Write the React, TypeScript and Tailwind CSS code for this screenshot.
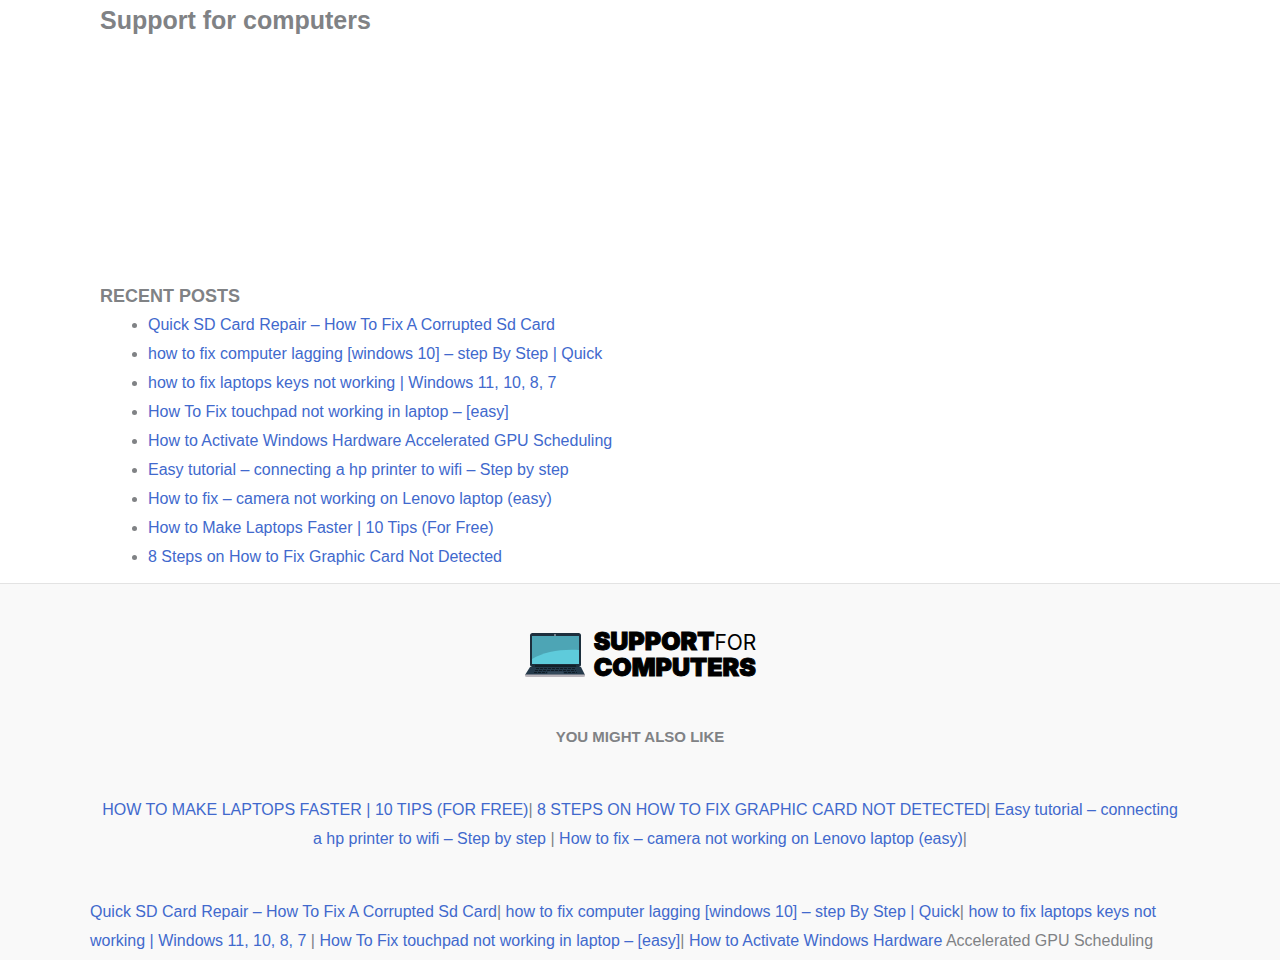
import React from "react";

type Post = { id: number; title: string };

const recentPosts: Post[] = [
  { id: 1, title: "Quick SD Card Repair – How To Fix A Corrupted Sd Card" },
  { id: 2, title: "how to fix computer lagging [windows 10] – step By Step | Quick" },
  { id: 3, title: "how to fix laptops keys not working | Windows 11, 10, 8, 7" },
  { id: 4, title: "How To Fix touchpad not working in laptop – [easy]" },
  { id: 5, title: "How to Activate Windows Hardware Accelerated GPU Scheduling" },
  { id: 6, title: "Easy tutorial – connecting a hp printer to wifi – Step by step" },
  { id: 7, title: "How to fix – camera not working on Lenovo laptop (easy)" },
  { id: 8, title: "How to Make Laptops Faster | 10 Tips (For Free)" },
  { id: 9, title: "8 Steps on How to Fix Graphic Card Not Detected" },
];

const FooterLink: React.FC<{ children: React.ReactNode }> = ({ children }) => (
  <a href="#" className="text-[#4169cd] hover:underline">{children}</a>
);

const LaptopIcon: React.FC = () => (
  <svg width="62" height="46" viewBox="0 0 62 46" aria-hidden="true">
    <rect x="6" y="1" width="51" height="34" rx="2.5" fill="#1d2f3d" />
    <rect x="8" y="4" width="47" height="28" fill="#4da5b5" />
    <path d="M8 32V27C20 20 36 17 55 18V32Z" fill="#5ecbdb" />
    <circle cx="31" cy="3" r="0.8" fill="#dfe7ea" />
    <path d="M11 33H52V36H11Z" fill="#132029" />
    <path d="M6 35H57L61 43H1Z" fill="#24394a" />
    <path d="M12 36.5H51M11 38.5H52M10 40.5H23M40 40.5H53" stroke="#101c26" strokeWidth="1" strokeDasharray="3 1" />
    <path d="M24 39.5H39L40 42H23Z" fill="#34495a" />
    <path d="M1 42.500H61V44Q61 45 59 45H3Q1 45 1 44Z" fill="#b9b5bb" />
  </svg>
);

const App: React.FC = () => {
  return (
    <div className="flex min-h-screen flex-col bg-white font-['Liberation_Sans',Arial,sans-serif] text-base leading-[29px] text-[#808285]">
      <main className="mx-auto w-full max-w-[1120px] px-5 pb-3">
        <h1 className="text-[25px] leading-10 font-bold">Support for computers</h1>

        <section className="mt-[242px]">
          <h2 className="text-lg leading-7 font-bold uppercase">Recent Posts</h2>
          <ul className="list-disc pl-12">
            {recentPosts.map((post) => (
              <li key={post.id}>
                <a href="#" className="text-[#4169cd] hover:underline">{post.title}</a>
              </li>
            ))}
          </ul>
        </section>
      </main>

      <footer className="flex-1 border-t border-[#e3e3e3] bg-[#f9f9f9]">
        <div className="mx-auto w-full max-w-[1100px]">
          <a href="#" className="mt-[45px] flex items-center justify-center gap-2 text-black">
            <LaptopIcon />
            <span className="font-[Inter,sans-serif] text-[25px] leading-[25px] font-black">
              <span className="[-webkit-text-stroke:1px_black]">SUPPORT</span>
              <span className="text-[21px] font-normal">FOR</span>
              <br />
              <span className="[-webkit-text-stroke:1px_black]">COMPUTERS</span>
            </span>
          </a>

          <h2 className="mt-[42px] text-center text-[15px] font-bold uppercase">You might also like</h2>

          <p className="mt-11 px-2 text-center">
            <FooterLink>HOW TO MAKE LAPTOPS FASTER | 10 TIPS (FOR FREE)</FooterLink>|{" "}
            <FooterLink>8 STEPS ON HOW TO FIX GRAPHIC CARD NOT DETECTED</FooterLink>|{" "}
            <FooterLink>Easy tutorial – connecting a hp printer to wifi – Step by step</FooterLink> |{" "}
            <FooterLink>How to fix – camera not working on Lenovo laptop (easy)</FooterLink>|
          </p>

          <p className="mt-11">
            <FooterLink>Quick SD Card Repair – How To Fix A Corrupted Sd Card</FooterLink>|{" "}
            <FooterLink>how to fix computer lagging [windows 10] – step By Step | Quick</FooterLink>|{" "}
            <FooterLink>how to fix laptops keys not working | Windows 11, 10, 8, 7</FooterLink> |{" "}
            <FooterLink>How To Fix touchpad not working in laptop – [easy]</FooterLink>|{" "}
            <FooterLink>How to Activate Windows Hardware</FooterLink> Accelerated GPU Scheduling
          </p>
        </div>
      </footer>
    </div>
  );
};

export default App;
